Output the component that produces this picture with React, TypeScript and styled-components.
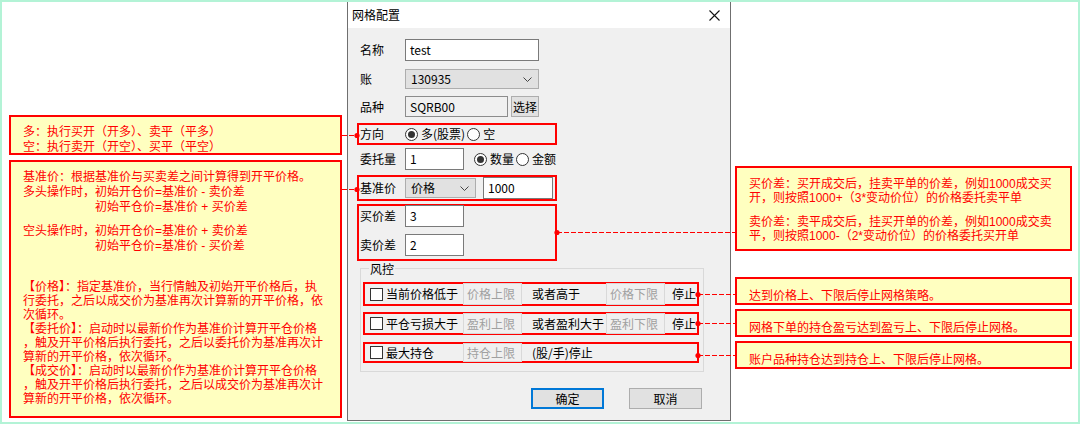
import React from 'react';
import styled, { createGlobalStyle } from 'styled-components';

const GlobalStyle = createGlobalStyle`
  html, body {
    margin: 0;
    padding: 0;
    background: #fff;
  }
  body {
    font-family: "Noto Sans CJK SC", "Noto Sans", sans-serif;
  }
`;

const Frame = styled.div`
  position: relative;
  width: 1080px;
  height: 424px;
  box-sizing: border-box;
  border: 2px solid #b3f3d6;
  background: #fff;
  display: flex;
  align-items: flex-start;
  font-family: "Noto Sans CJK SC", "Noto Sans", sans-serif;
`;

/* ---------- annotations ---------- */

const NoteColumn = styled.div<{ $left: number; $top: number; $width: number }>`
  margin-left: ${p => p.$left}px;
  margin-top: ${p => p.$top}px;
  width: ${p => p.$width}px;
  display: flex;
  flex-direction: column;
`;

// Liberation Sans first keeps the line boxes tight; the CJK glyphs fall back to Noto
const NoteBox = styled.div<{ $h: number; $pt: number; $mt?: number; $lh?: number }>`
  box-sizing: border-box;
  height: ${p => p.$h}px;
  margin-top: ${p => p.$mt ?? 0}px;
  padding: ${p => p.$pt}px 0 0 12px;
  background: #ffffc0;
  border: 2px solid #ff0000;
  color: #ff0000;
  font-family: "Liberation Sans", "Noto Sans CJK SC", sans-serif;
  font-size: 12px;
  line-height: ${p => p.$lh ?? 15}px;
  white-space: nowrap;
`;

const NoteLine = styled.div<{ $indent?: boolean; $gap?: number; $lh?: number }>`
  padding-left: ${p => (p.$indent ? 72 : 0)}px;
  margin-top: ${p => p.$gap ?? 0}px;
  ${p => (p.$lh ? `line-height: ${p.$lh}px;` : '')}
`;

/* ---------- dialog ---------- */

const Dialog = styled.div`
  margin-left: 5px;
  width: 384px;
  height: 419px;
  box-sizing: border-box;
  border: 1px solid #6f6f6f;
  border-top: none;
  background: #f0f0f0;
  display: flex;
  flex-direction: column;
  font-size: 12px;
  color: #000;
`;

const TitleBar = styled.div`
  height: 26px;
  flex-shrink: 0;
  background: #fff;
  display: flex;
  align-items: center;
  justify-content: space-between;
  padding: 0 10px 0 4px;
`;

const Title = styled.span`
  font-size: 12px;
  line-height: 16px;
`;

const Body = styled.div`
  display: flex;
  flex-direction: column;
  padding-left: 12px;
`;

const FormRow = styled.div<{ $h: number; $mt: number }>`
  display: flex;
  align-items: center;
  height: ${p => p.$h}px;
  margin-top: ${p => p.$mt}px;
`;

const Highlight = styled.div<{ $h: number; $mt: number; $column?: boolean }>`
  box-sizing: border-box;
  width: 200px;
  height: ${p => p.$h}px;
  margin-top: ${p => p.$mt}px;
  margin-left: -3px;
  padding-left: 1px;
  border: 2px solid #ff0000;
  display: flex;
  flex-direction: ${p => (p.$column ? 'column' : 'row')};
  align-items: ${p => (p.$column ? 'stretch' : 'center')};
`;

const Label = styled.span`
  width: 45px;
  flex-shrink: 0;
  line-height: 16px;
`;

const TextBox = styled.div<{ $w: number; $h?: number; $ml?: number; $readOnly?: boolean }>`
  box-sizing: border-box;
  width: ${p => p.$w}px;
  height: ${p => p.$h ?? 22}px;
  margin-left: ${p => p.$ml ?? 0}px;
  padding-left: 4px;
  border: 1px solid ${p => (p.$readOnly ? '#8c8c8c' : '#7a7a7a')};
  background: ${p => (p.$readOnly ? '#f0f0f0' : '#fff')};
  display: flex;
  align-items: center;
  font-size: 12px;
  line-height: 16px;
`;

const Combo = styled.div<{ $w: number }>`
  box-sizing: border-box;
  width: ${p => p.$w}px;
  height: 20px;
  padding: 0 6px 0 5px;
  border: 1px solid #adadad;
  background: #e1e1e1;
  display: flex;
  align-items: center;
  justify-content: space-between;
  line-height: 16px;
`;

const SmallButton = styled.div`
  box-sizing: border-box;
  width: 28px;
  height: 21px;
  margin-left: 3px;
  border: 1px solid #adadad;
  background: #e1e1e1;
  display: flex;
  align-items: center;
  justify-content: center;
  line-height: 16px;
`;

const RadioGroup = styled.div<{ $ml?: number }>`
  display: flex;
  align-items: center;
  margin-left: ${p => p.$ml ?? 0}px;
`;

const RadioItem = styled.label`
  display: flex;
  align-items: center;
  margin-right: 2px;
  line-height: 16px;
`;

const RadioDot = styled.span<{ $checked?: boolean }>`
  box-sizing: border-box;
  width: 13px;
  height: 13px;
  margin-right: 3px;
  border: 1px solid #333;
  border-radius: 50%;
  background: #fff;
  display: flex;
  align-items: center;
  justify-content: center;

  &::after {
    content: '';
    width: 7px;
    height: 7px;
    border-radius: 50%;
    background: ${p => (p.$checked ? '#333' : 'transparent')};
  }
`;

const SpreadLine = styled.div<{ $mt: number }>`
  display: flex;
  align-items: center;
  height: 22px;
  margin-top: ${p => p.$mt}px;
`;

/* ---------- risk group ---------- */

const Group = styled.div`
  position: relative;
  box-sizing: border-box;
  width: 344px;
  height: 104px;
  margin-top: 7px;
  padding: 13px 4px 0 2px;
  border: 1px solid #d9d9d9;
  display: flex;
  flex-direction: column;
`;

const GroupTitle = styled.span`
  position: absolute;
  top: -8px;
  left: 8px;
  padding: 0 1px;
  background: #f0f0f0;
  line-height: 16px;
`;

const RiskRow = styled.div<{ $h: number; $mt: number }>`
  box-sizing: border-box;
  width: 336px;
  height: ${p => p.$h}px;
  margin-top: ${p => p.$mt}px;
  padding-left: 5px;
  border: 2px solid #ff0000;
  display: flex;
  align-items: center;
  line-height: 16px;
`;

const CheckBox = styled.span`
  box-sizing: border-box;
  width: 13px;
  height: 13px;
  flex-shrink: 0;
  border: 1px solid #333;
  background: #fff;
`;

const CheckLabel = styled.span`
  width: 77px;
  margin-left: 3px;
  flex-shrink: 0;
`;

const LimitBox = styled.div`
  box-sizing: border-box;
  width: 59px;
  align-self: stretch;
  margin: -1px 0;
  padding-left: 3px;
  border: 1px solid #d9d9d9;
  background: #f0f0f0;
  color: #a0a0a0;
  display: flex;
  align-items: center;
`;

const MidText = styled.span<{ $w?: number }>`
  margin-left: 10px;
  ${p => (p.$w ? `width: ${p.$w}px;` : '')}
  flex-shrink: 0;
`;

const StopText = styled.span`
  margin-left: 7px;
`;

const ButtonRow = styled.div`
  display: flex;
  justify-content: flex-end;
  gap: 25px;
  margin-top: 16px;
  padding-right: 28px;
`;

const DialogButton = styled.div<{ $primary?: boolean }>`
  box-sizing: border-box;
  width: 73px;
  height: 21px;
  border: ${p => (p.$primary ? '2px solid #0078d7' : '1px solid #adadad')};
  background: #e1e1e1;
  display: flex;
  align-items: center;
  justify-content: center;
  line-height: 16px;
`;

const Connectors = styled.svg`
  position: absolute;
  top: -2px;
  left: -2px;
  pointer-events: none;
`;

const Chevron = () => (
  <svg width="9" height="5" viewBox="0 0 9 5">
    <path d="M0.5 0.5 L4.5 4.5 L8.5 0.5" fill="none" stroke="#444" strokeWidth="1" />
  </svg>
);

const CloseIcon = () => (
  <svg width="11" height="11" viewBox="0 0 11 11">
    <path d="M0.5 0.5 L10.5 10.5 M10.5 0.5 L0.5 10.5" stroke="#111" strokeWidth="1.1" />
  </svg>
);

const links = [
  { x1: 342, x2: 357, y: 135.5, dot: 357 },
  { x1: 342, x2: 357, y: 189.5, dot: 357 },
  { x1: 557, x2: 735, y: 232.5, dot: 557 },
  { x1: 698, x2: 736, y: 294.5, dot: 698 },
  { x1: 698, x2: 736, y: 323.5, dot: 698 },
  { x1: 698, x2: 736, y: 355.5, dot: 698 },
];

const App: React.FC = () => {
  return (
    <>
      <GlobalStyle />
      <Frame>
        <NoteColumn $left={7} $top={113} $width={333}>
          <NoteBox $h={40} $pt={8}>
            <NoteLine>多：执行买开（开多）、卖平（平多）</NoteLine>
            <NoteLine>空：执行卖开（开空）、买平（平空）</NoteLine>
          </NoteBox>
          <NoteBox $h={258} $pt={8} $mt={5}>
            <NoteLine>基准价：根据基准价与买卖差之间计算得到开平价格。</NoteLine>
            <NoteLine>多头操作时，初始开仓价=基准价 - 卖价差</NoteLine>
            <NoteLine $indent>初始平仓价=基准价 + 买价差</NoteLine>
            <NoteLine $gap={9}>空头操作时，初始开仓价=基准价 + 卖价差</NoteLine>
            <NoteLine $indent>初始平仓价=基准价 - 买价差</NoteLine>
            <NoteLine $gap={26} $lh={14}>【价格】：指定基准价，当行情触及初始开平价格后，执</NoteLine>
            <NoteLine $lh={14}>行委托，之后以成交价为基准再次计算新的开平价格，依</NoteLine>
            <NoteLine $lh={14}>次循环。</NoteLine>
            <NoteLine $lh={14}>【委托价】：启动时以最新价作为基准价计算开平仓价格</NoteLine>
            <NoteLine $lh={14}>，触及开平价格后执行委托，之后以委托价为基准再次计</NoteLine>
            <NoteLine $lh={14}>算新的开平价格，依次循环。</NoteLine>
            <NoteLine $lh={14}>【成交价】：启动时以最新价作为基准价计算开平仓价格</NoteLine>
            <NoteLine $lh={14}>，触及开平价格后执行委托，之后以成交价为基准再次计</NoteLine>
            <NoteLine $lh={14}>算新的开平价格，依次循环。</NoteLine>
          </NoteBox>
        </NoteColumn>

        <Dialog>
          <TitleBar>
            <Title>网格配置</Title>
            <CloseIcon />
          </TitleBar>
          <Body>
            <FormRow $h={22} $mt={11}>
              <Label>名称</Label>
              <TextBox $w={134}>test</TextBox>
            </FormRow>
            <FormRow $h={20} $mt={8}>
              <Label>账</Label>
              <Combo $w={134}>
                <span>130935</span>
                <Chevron />
              </Combo>
            </FormRow>
            <FormRow $h={21} $mt={7}>
              <Label>品种</Label>
              <TextBox $w={103} $h={21} $readOnly>SQRB00</TextBox>
              <SmallButton>选择</SmallButton>
            </FormRow>
            <Highlight $h={22} $mt={6}>
              <Label>方向</Label>
              <RadioGroup>
                <RadioItem><RadioDot $checked />多(股票)</RadioItem>
                <RadioItem><RadioDot />空</RadioItem>
              </RadioGroup>
            </Highlight>
            <FormRow $h={22} $mt={3}>
              <Label>委托量</Label>
              <TextBox $w={59}>1</TextBox>
              <RadioGroup $ml={10}>
                <RadioItem><RadioDot $checked />数量</RadioItem>
                <RadioItem><RadioDot />金额</RadioItem>
              </RadioGroup>
            </FormRow>
            <Highlight $h={26} $mt={5}>
              <Label>基准价</Label>
              <Combo $w={71}>
                <span>价格</span>
                <Chevron />
              </Combo>
              <TextBox $w={70} $ml={7}>1000</TextBox>
            </Highlight>
            <Highlight $h={57} $mt={3} $column>
              <SpreadLine $mt={-1}>
                <Label>买价差</Label>
                <TextBox $w={59}>3</TextBox>
              </SpreadLine>
              <SpreadLine $mt={7}>
                <Label>卖价差</Label>
                <TextBox $w={59}>2</TextBox>
              </SpreadLine>
            </Highlight>

            <Group>
              <GroupTitle>风控</GroupTitle>
              <RiskRow $h={24} $mt={0}>
                <CheckBox />
                <CheckLabel>当前价格低于</CheckLabel>
                <LimitBox>价格上限</LimitBox>
                <MidText $w={74}>或者高于</MidText>
                <LimitBox>价格下限</LimitBox>
                <StopText>停止</StopText>
              </RiskRow>
              <RiskRow $h={23} $mt={6}>
                <CheckBox />
                <CheckLabel>平仓亏损大于</CheckLabel>
                <LimitBox>盈利上限</LimitBox>
                <MidText $w={74}>或者盈利大于</MidText>
                <LimitBox>盈利下限</LimitBox>
                <StopText>停止</StopText>
              </RiskRow>
              <RiskRow $h={21} $mt={7}>
                <CheckBox />
                <CheckLabel>最大持仓</CheckLabel>
                <LimitBox>持仓上限</LimitBox>
                <MidText>(股/手)停止</MidText>
              </RiskRow>
            </Group>

            <ButtonRow>
              <DialogButton $primary>确定</DialogButton>
              <DialogButton>取消</DialogButton>
            </ButtonRow>
          </Body>
        </Dialog>

        <NoteColumn $left={4} $top={164} $width={337}>
          <NoteBox $h={85} $pt={9} $lh={14}>
            <NoteLine>买价差：买开成交后，挂卖平单的价差，例如1000成交买</NoteLine>
            <NoteLine>开，则按照1000+（3*变动价位）的价格委托卖平单</NoteLine>
            <NoteLine $gap={10}>卖价差：卖平成交后，挂买开单的价差，例如1000成交卖</NoteLine>
            <NoteLine>平，则按照1000-（2*变动价位）的价格委托买开单</NoteLine>
          </NoteBox>
          <NoteBox $h={28} $pt={10} $mt={26} $lh={14}>
            <NoteLine>达到价格上、下限后停止网格策略。</NoteLine>
          </NoteBox>
          <NoteBox $h={28} $pt={10} $mt={4} $lh={14}>
            <NoteLine>网格下单的持仓盈亏达到盈亏上、下限后停止网格。</NoteLine>
          </NoteBox>
          <NoteBox $h={28} $pt={10} $mt={4} $lh={14}>
            <NoteLine>账户品种持仓达到持仓上、下限后停止网格。</NoteLine>
          </NoteBox>
        </NoteColumn>

        <Connectors width="1080" height="424" viewBox="0 0 1080 424">
          {links.map((l, i) => (
            <g key={i}>
              <line x1={l.x1} y1={l.y} x2={l.x2} y2={l.y} stroke="#ff0000" strokeWidth="1" strokeDasharray="5 2" />
              <circle cx={l.dot} cy={l.y} r="2.6" fill="#ff0000" />
            </g>
          ))}
        </Connectors>
      </Frame>
    </>
  );
};

export default App;
